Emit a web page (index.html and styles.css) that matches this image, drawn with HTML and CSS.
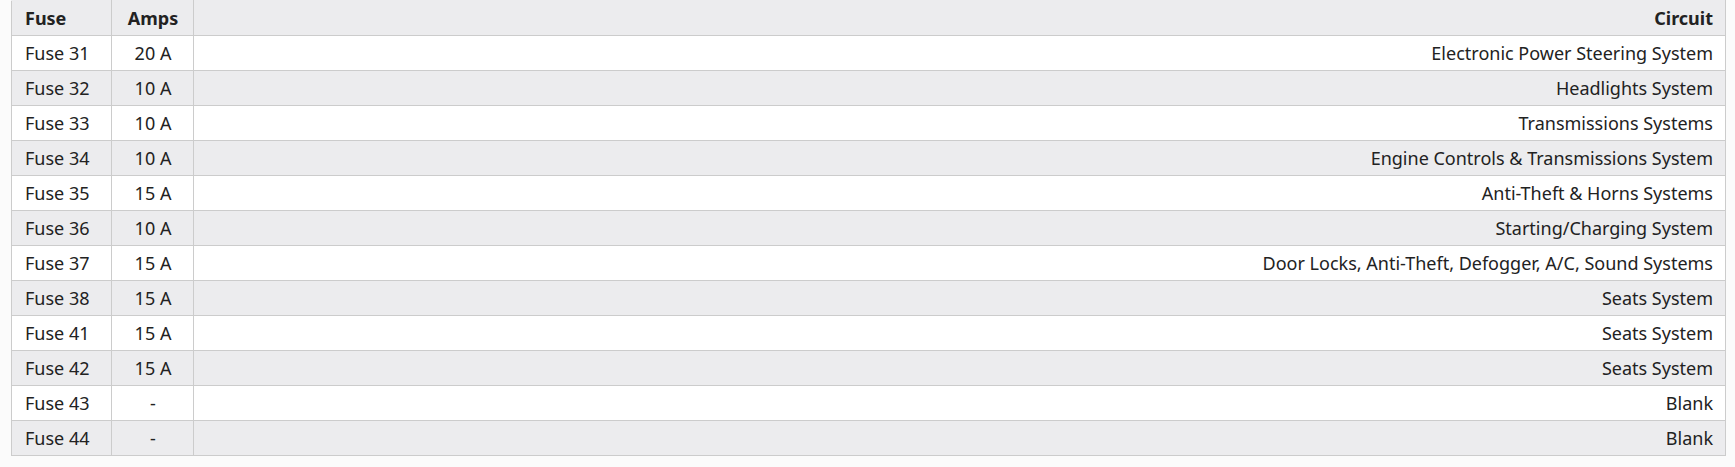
FILE: index.html
```html
<!DOCTYPE html>
<html>
<head>
<meta charset="utf-8">
<link rel="stylesheet" href="styles.css">
</head>
<body>
<div class="wrap">
<table class="fuse-table">
  <thead>
    <tr><th class="c-fuse">Fuse</th><th class="c-amps">Amps</th><th class="c-circuit">Circuit</th></tr>
  </thead>
  <tbody>
    <tr><td class="c-fuse">Fuse 31</td><td class="c-amps">20 A</td><td class="c-circuit">Electronic Power Steering System</td></tr>
    <tr><td class="c-fuse">Fuse 32</td><td class="c-amps">10 A</td><td class="c-circuit">Headlights System</td></tr>
    <tr><td class="c-fuse">Fuse 33</td><td class="c-amps">10 A</td><td class="c-circuit">Transmissions Systems</td></tr>
    <tr><td class="c-fuse">Fuse 34</td><td class="c-amps">10 A</td><td class="c-circuit">Engine Controls &amp; Transmissions System</td></tr>
    <tr><td class="c-fuse">Fuse 35</td><td class="c-amps">15 A</td><td class="c-circuit">Anti-Theft &amp; Horns Systems</td></tr>
    <tr><td class="c-fuse">Fuse 36</td><td class="c-amps">10 A</td><td class="c-circuit">Starting/Charging System</td></tr>
    <tr><td class="c-fuse">Fuse 37</td><td class="c-amps">15 A</td><td class="c-circuit">Door Locks, Anti-Theft, Defogger, A/C, Sound Systems</td></tr>
    <tr><td class="c-fuse">Fuse 38</td><td class="c-amps">15 A</td><td class="c-circuit">Seats System</td></tr>
    <tr><td class="c-fuse">Fuse 41</td><td class="c-amps">15 A</td><td class="c-circuit">Seats System</td></tr>
    <tr><td class="c-fuse">Fuse 42</td><td class="c-amps">15 A</td><td class="c-circuit">Seats System</td></tr>
    <tr><td class="c-fuse">Fuse 43</td><td class="c-amps">-</td><td class="c-circuit">Blank</td></tr>
    <tr><td class="c-fuse">Fuse 44</td><td class="c-amps">-</td><td class="c-circuit">Blank</td></tr>
  </tbody>
</table>
</div>
</body>
</html>
```

FILE: styles.css
```css
html, body {
  margin: 0;
  padding: 0;
  background: #fbfbfb;
}
.wrap {
  padding: 0 9px 0 11px;
}
.fuse-table {
  width: 100%;
  border-collapse: collapse;
  table-layout: fixed;
  font-family: "Noto Sans", "Open Sans", sans-serif;
  font-size: 18px;
  color: #222;
}
.fuse-table th,
.fuse-table td {
  border: 1px solid #cccccc;
  height: 35px;
  padding: 0 12px 0 13px;
  box-sizing: border-box;
  line-height: 22px;
  white-space: nowrap;
}
.fuse-table thead th {
  background: #ececee;
  font-weight: 700;
  border-top-color: #ececee;
}
.fuse-table tbody tr:nth-child(odd) td { background: #ffffff; }
.fuse-table tbody tr:nth-child(even) td { background: #ececee; }
.c-fuse { text-align: left; width: 100px; }
.c-amps { text-align: center; width: 82px; }
.c-circuit { text-align: right; }
```
